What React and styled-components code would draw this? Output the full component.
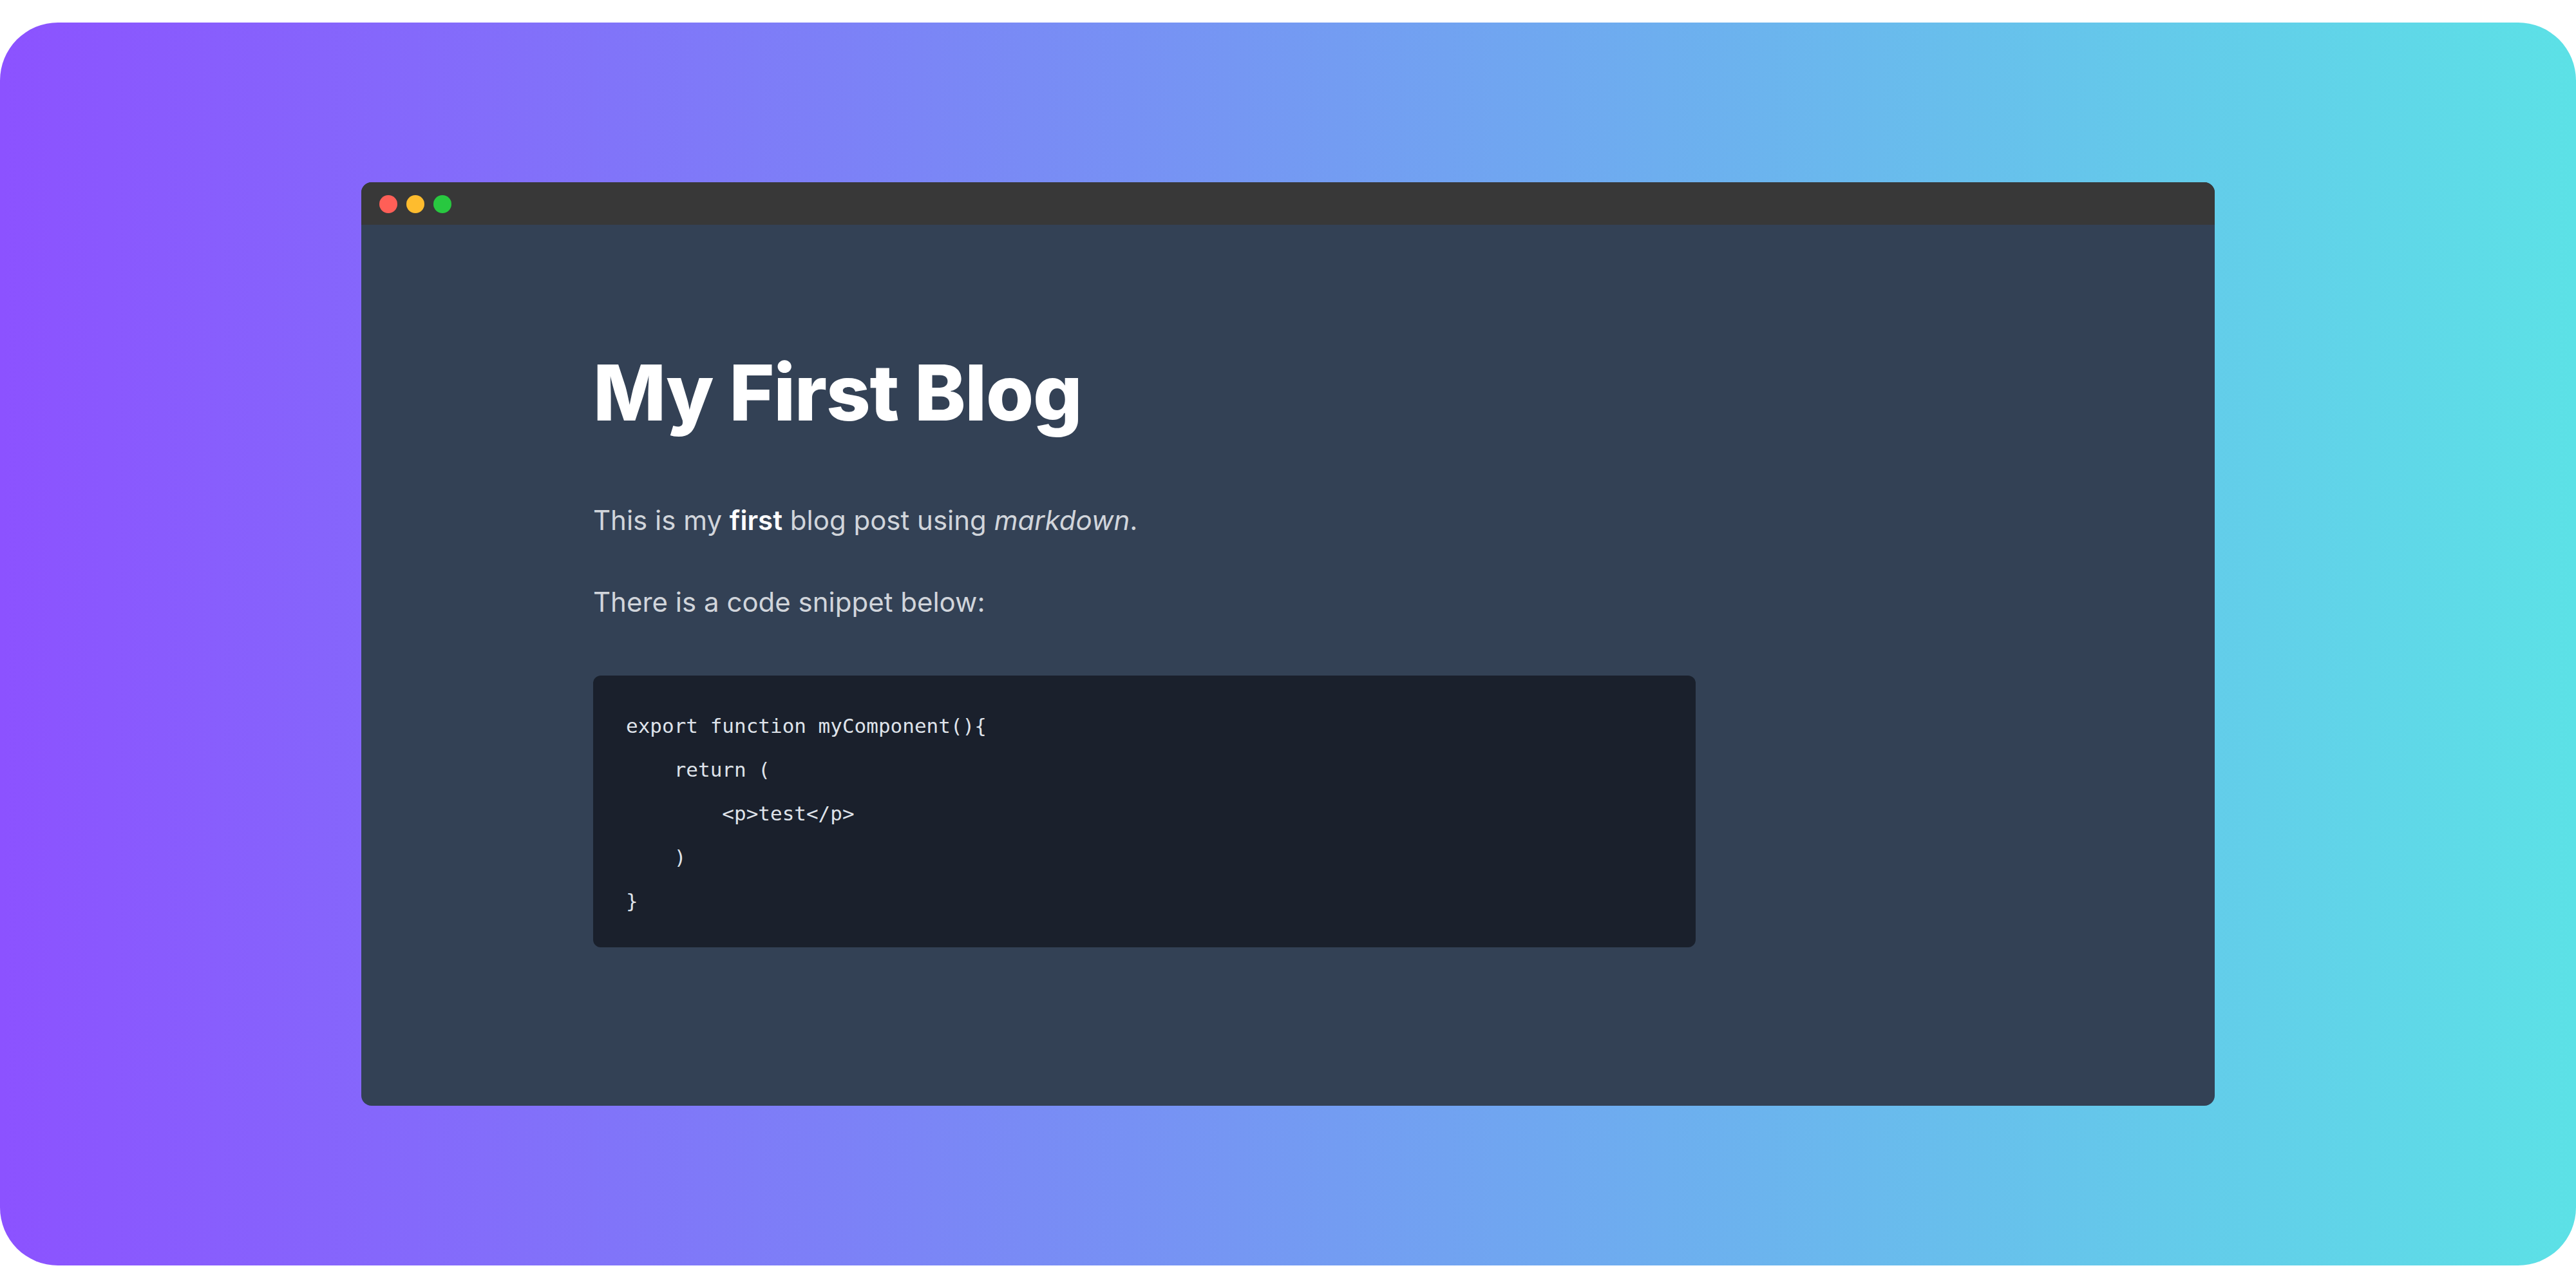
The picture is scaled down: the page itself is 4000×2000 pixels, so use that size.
import React from "react";
import styled, { createGlobalStyle } from "styled-components";

const GlobalStyle = createGlobalStyle`
  html, body {
    margin: 0;
    padding: 0;
    background: #ffffff;
  }
  * {
    box-sizing: border-box;
  }
`;

const Page = styled.div`
  width: 4000px;
  height: 2000px;
  padding: 35px 0;
`;

const Backdrop = styled.div`
  height: 100%;
  border-radius: 90px;
  background: linear-gradient(to right, #8c52ff, #5ce1e6);
  display: flex;
  align-items: center;
  justify-content: center;
`;

const Window = styled.div`
  width: 2878px;
  height: 1434px;
  border-radius: 16px;
  overflow: hidden;
  background: #334155;
  display: flex;
  flex-direction: column;
`;

const TitleBar = styled.div`
  height: 66px;
  background: #383838;
  display: flex;
  align-items: center;
  gap: 14px;
  padding: 2px 0 0 28px;
`;

const Dot = styled.span`
  width: 28px;
  height: 28px;
  border-radius: 50%;
  background: ${(p) => p.color};
`;

const Article = styled.article`
  padding: 194px 0 0 360px;
  font-family: Inter, "Noto Sans", sans-serif;
  color: #d1d5db;
`;

const Title = styled.h1`
  margin: 0 0 97px;
  font-size: 120px;
  line-height: 133px;
  font-weight: 800;
  letter-spacing: -1.3px;
  color: #ffffff;
`;

const Para = styled.p`
  margin: 0 0 ${(p) => p.gap}px;
  font-size: 42px;
  line-height: 70px;

  strong {
    color: #ffffff;
    font-weight: 600;
  }
`;

const CodeBlock = styled.pre`
  margin: 0;
  width: 1712px;
  padding: 44px 51px 38px;
  border-radius: 12px;
  background: #1a202c;
  color: #dfe3ea;
  font-family: "DejaVu Sans Mono", "Liberation Mono", monospace;
  font-size: 31px;
  line-height: 68px;
`;

const code = `export function myComponent(){
    return (
        <p>test</p>
    )
}`;

export default function App() {
  return (
    <>
      <GlobalStyle />
      <Page>
        <Backdrop>
          <Window>
            <TitleBar>
              <Dot color="#ff5f57" />
              <Dot color="#febc2e" />
              <Dot color="#28c840" />
            </TitleBar>
            <Article>
              <Title>My First Blog</Title>
              <Para gap={57}>
                This is my <strong>first</strong> blog post using{" "}
                <em>markdown</em>.
              </Para>
              <Para gap={79}>There is a code snippet below:</Para>
              <CodeBlock>{code}</CodeBlock>
            </Article>
          </Window>
        </Backdrop>
      </Page>
    </>
  );
}
